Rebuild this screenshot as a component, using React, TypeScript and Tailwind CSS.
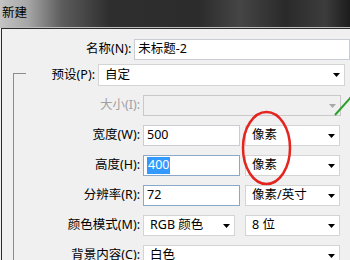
import type { ReactNode } from 'react';

function Arrow({ disabled }: { disabled?: boolean }) {
  return (
    <svg width="7" height="4" viewBox="0 0 7 4" className="shrink-0">
      <path d="M0 0H7L3.5 4Z" fill={disabled ? '#a8a8a8' : '#000'} />
    </svg>
  );
}

function Combo({ value, width, disabled }: { value?: string; width: string; disabled?: boolean }) {
  return (
    <div
      className={`${width} h-[21px] flex items-center justify-between pl-[6px] pr-[4px] border ${
        disabled ? 'border-[#c9c9c9] bg-[#f0f0f0]' : 'border-[#d4d4d4] bg-white'
      }`}
    >
      <span>{value}</span>
      <Arrow disabled={disabled} />
    </div>
  );
}

function Field({ children, width, focus }: { children: ReactNode; width: string; focus?: boolean }) {
  return (
    <div
      className={`${width} h-[21px] flex items-center pl-[3px] bg-white border ${
        focus ? 'border-[#8aa8c8]' : 'border-[#c9ccd2]'
      }`}
    >
      {children}
    </div>
  );
}

function Row({ label, children, muted }: { label: string; children: ReactNode; muted?: boolean }) {
  return (
    <div className="flex items-center">
      <div className={`w-[126px] text-right whitespace-nowrap ${muted ? 'text-[#a0a0a0]' : ''}`}>{label}</div>
      <div className="ml-[3px] flex gap-[5px]">{children}</div>
    </div>
  );
}

export default function App() {
  return (
    <div className="relative w-[350px] h-[260px] overflow-hidden bg-[#f0f0f0] text-[12.5px] leading-none text-black font-['Noto_Sans','Noto_Sans_CJK_SC',sans-serif]">
      <div className="h-[27px] flex items-center pl-[2px] bg-[linear-gradient(to_right,#c4c4c4_0px,#a6a6a6_28px,#5c5c5c_62px,#2e2e2e_110px,#2c2c2c_200px,#454545_240px,#2a2a2a_285px,#3c3c3c_325px,#1c1c1c_350px)]">
        新建
      </div>
      <div className="h-px bg-[#bdbdbd]" />
      <div className="ml-px h-[240px] border-l border-t border-[#2b2b2b] pt-[10px]">
        <div className="flex items-center">
          <div className="w-[138px] text-right">名称(N):</div>
          <div className="ml-[3px] w-[230px] h-[21px] flex items-center pl-[3px] bg-white border border-[#c9ccd2]">
            未标题-2
          </div>
        </div>

        <fieldset className="ml-[11px] w-[400px] border-l border-t border-[#8c8c8c] p-0 m-0 mr-0">
          <legend className="ml-[12px] w-[380px] p-0 pt-[4px]">
            <div className="flex items-center">
              <div className="w-[69px] text-right">预设(P):</div>
              <div className="ml-[3px] w-[247px] h-[22px] flex items-center justify-between pl-[6px] pr-[4px] bg-white border border-[#d4d4d4]">
                <span>自定</span>
                <Arrow />
              </div>
            </div>
          </legend>
          <div className="flex flex-col gap-[9px] pt-[9px]">
            <Row label="大小(I):" muted>
              <Combo width="w-[198px]" disabled />
            </Row>
            <Row label="宽度(W):">
              <Field width="w-[97px]">500</Field>
              <Combo width="w-[95px]" value="像素" />
            </Row>
            <Row label="高度(H):">
              <Field width="w-[97px]" focus>
                <span className="bg-[#3399ff] text-white px-px py-[2px]">400</span>
              </Field>
              <Combo width="w-[95px]" value="像素" />
            </Row>
            <Row label="分辨率(R):">
              <Field width="w-[97px]" focus>72</Field>
              <Combo width="w-[95px]" value="像素/英寸" />
            </Row>
            <Row label="颜色模式(M):">
              <div className="flex gap-[10px]">
                <Combo width="w-[92px]" value="RGB 颜色" />
                <Combo width="w-[95px]" value="8 位" />
              </div>
            </Row>
            <Row label="背景内容(C):">
              <Combo width="w-[197px]" value="白色" />
            </Row>
          </div>
        </fieldset>
      </div>

      <svg className="absolute left-[240px] top-[108px]" width="54" height="80" viewBox="0 0 54 80">
        <ellipse cx="26.5" cy="40" rx="23.5" ry="36" fill="none" stroke="#e3241f" strokeWidth="2.5" />
      </svg>
      <svg className="absolute left-[330px] top-[92px]" width="20" height="28" viewBox="0 0 20 28">
        <line x1="5" y1="23" x2="22" y2="4" stroke="#2ca02c" strokeWidth="2" />
      </svg>
    </div>
  );
}
